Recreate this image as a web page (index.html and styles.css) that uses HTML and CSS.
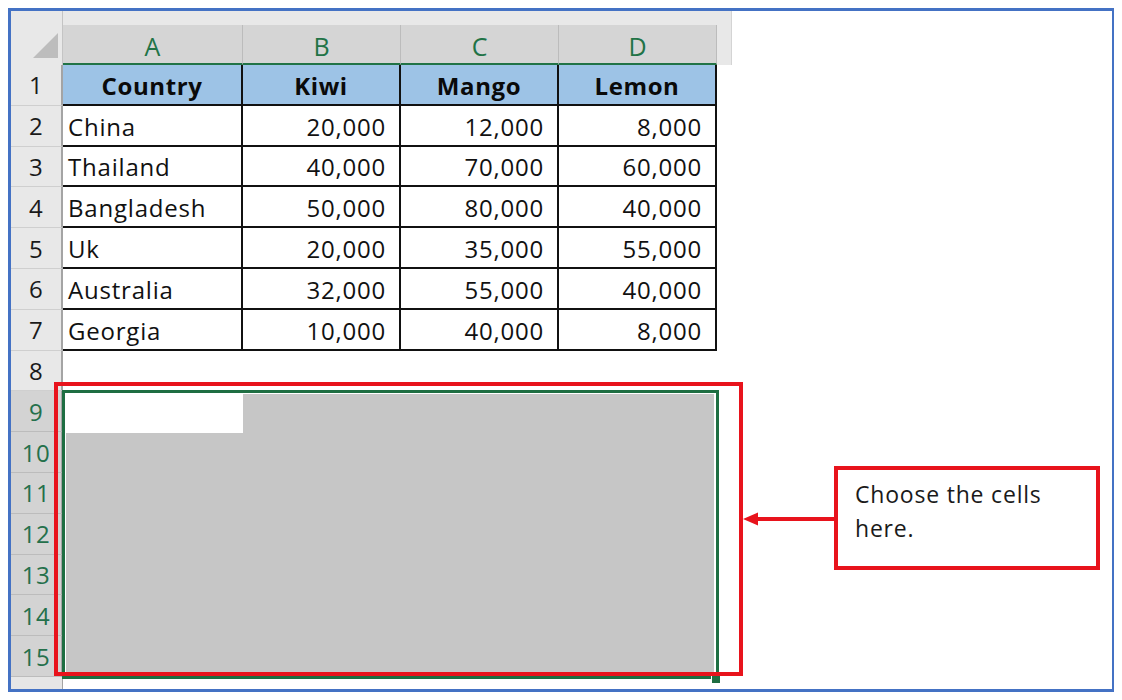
FILE: index.html
```html
<!DOCTYPE html>
<html>
<head>
<meta charset="utf-8">
<link rel="stylesheet" href="styles.css">
</head>
<body>
<div class="frame">
  <div class="sheet">
    <div class="colheads">
      <div class="corner">
        <svg class="tri" width="25" height="25" viewBox="0 0 25 25"><polygon points="25,0 25,25 0,25" fill="#bdbdbd"/></svg>
      </div>
      <div class="ch">A</div>
      <div class="ch">B</div>
      <div class="ch">C</div>
      <div class="ch">D</div>
    </div>

    <div class="row">
      <div class="rh">1</div>
      <div class="c hd">Country</div>
      <div class="c hd">Kiwi</div>
      <div class="c hd">Mango</div>
      <div class="c hd">Lemon</div>
    </div>
    <div class="row">
      <div class="rh">2</div>
      <div class="c">China</div>
      <div class="c num">20,000</div>
      <div class="c num">12,000</div>
      <div class="c num">8,000</div>
    </div>
    <div class="row">
      <div class="rh">3</div>
      <div class="c">Thailand</div>
      <div class="c num">40,000</div>
      <div class="c num">70,000</div>
      <div class="c num">60,000</div>
    </div>
    <div class="row">
      <div class="rh">4</div>
      <div class="c">Bangladesh</div>
      <div class="c num">50,000</div>
      <div class="c num">80,000</div>
      <div class="c num">40,000</div>
    </div>
    <div class="row">
      <div class="rh">5</div>
      <div class="c">Uk</div>
      <div class="c num">20,000</div>
      <div class="c num">35,000</div>
      <div class="c num">55,000</div>
    </div>
    <div class="row">
      <div class="rh">6</div>
      <div class="c">Australia</div>
      <div class="c num">32,000</div>
      <div class="c num">55,000</div>
      <div class="c num">40,000</div>
    </div>
    <div class="row">
      <div class="rh">7</div>
      <div class="c">Georgia</div>
      <div class="c num">10,000</div>
      <div class="c num">40,000</div>
      <div class="c num">8,000</div>
    </div>
    <div class="row">
      <div class="rh">8</div>
    </div>

    <div class="selblock">
      <div class="rhs">
        <div class="rh sel">9</div>
        <div class="rh sel">10</div>
        <div class="rh sel">11</div>
        <div class="rh sel">12</div>
        <div class="rh sel">13</div>
        <div class="rh sel">14</div>
        <div class="rh sel">15</div>
      </div>
      <div class="selection">
        <div class="selfill"><div class="active"></div></div>
        <span class="handle"></span>
      </div>
    </div>

    <div class="row16">
      <div class="rh16"></div>
    </div>
  </div>

  <div class="redbox"></div>
  <svg class="arrow" width="92" height="16" viewBox="0 0 92 16">
    <line x1="12" y1="8" x2="92" y2="8" stroke="#e8131c" stroke-width="4"/>
    <polygon points="0,8 15,1.5 15,14.5" fill="#e8131c"/>
  </svg>
  <div class="callout">Choose the cells<br>here.</div>
</div>
</body>
</html>
```

FILE: styles.css
```css
body {
  margin: 8px;
  background: #ffffff;
  font-family: "Open Sans", "Noto Sans", sans-serif;
  color: #111111;
}

.frame {
  position: relative;
  width: 1107px;
  height: 684px;
  box-sizing: border-box;
  border: 3px solid #4472c4;
  background: #ffffff;
}

.sheet {
  width: 721px;
  display: flex;
  flex-direction: column;
}

.colheads {
  display: grid;
  grid-template-columns: 52px 180px 158px 158px 158px;
  height: 54px;
  background: #e8e8e8;
  border-right: 1px solid #d4d4d4;
  box-sizing: border-box;
}

.corner {
  position: relative;
  border-right: 1px solid #c4c4c4;
}

.tri {
  position: absolute;
  left: 22px;
  top: 22px;
}

.ch {
  margin-top: 14px;
  border-bottom: 2px solid #217346;
  border-right: 1px solid #bcbcbc;
  background: #d5d5d5;
  color: #217346;
  font-size: 25px;
  display: flex;
  align-items: center;
  justify-content: center;
  padding-top: 3px;
  box-sizing: content-box;
  height: 35px;
}

.row {
  display: grid;
  grid-template-columns: 52px 180px 158px 158px 158px;
  height: 40.8px;
}

.rh {
  box-sizing: border-box;
  background: #e8e8e8;
  border-bottom: 1px solid #cfcfcf;
  border-right: 2px solid #a4a4a4;
  display: flex;
  align-items: center;
  justify-content: center;
  font-size: 24px;
  color: #1a1a1a;
  letter-spacing: 0.5px;
}

.c {
  box-sizing: border-box;
  border-right: 2px solid #111111;
  border-bottom: 2px solid #111111;
  display: flex;
  align-items: center;
  padding: 2px 13px 0 5px;
  font-size: 24px;
  letter-spacing: 0.8px;
  white-space: nowrap;
  background: #ffffff;
  color: #111111;
}

.c.num {
  justify-content: flex-end;
}

.c.hd {
  background: #9dc3e6;
  font-weight: 700;
  justify-content: center;
  padding: 2px 0 0 0;
  letter-spacing: 0.6px;
  color: #0a0a0a;
}

.selblock {
  display: grid;
  grid-template-columns: 52px 657px;
  height: 285.6px;
}

.rhs {
  display: grid;
  grid-template-rows: repeat(7, 40.8px);
}

.rh.sel {
  background: #d3d3d3;
  color: #24704b;
  border-bottom: 1px solid #bcbcbc;
}

.selection {
  position: relative;
  box-sizing: border-box;
  width: 657px;
  height: 289px;
  margin: -1px 0 0 -1px;
  border: 3px solid #1e6e42;
  padding: 1px 2px 2px 1px;
  background: #ffffff;
}

.selfill {
  height: 100%;
  background: #c6c6c6;
}

.active {
  width: 177px;
  height: 39px;
  background: #ffffff;
}

.handle {
  position: absolute;
  right: -4px;
  bottom: -7px;
  width: 8px;
  height: 8px;
  background: #1e6e42;
  border-left: 1px solid #ffffff;
  border-top: 1px solid #ffffff;
}

.row16 {
  display: flex;
  height: 12px;
}

.rh16 {
  width: 52px;
  box-sizing: border-box;
  background: #e6e6e6;
  border-right: 1px solid #a4a4a4;
}

.redbox {
  position: absolute;
  left: 43px;
  top: 371px;
  width: 689px;
  height: 294px;
  box-sizing: border-box;
  border: 4px solid #e8131c;
}

.arrow {
  position: absolute;
  left: 732px;
  top: 500px;
}

.callout {
  position: absolute;
  left: 823px;
  top: 455px;
  width: 266px;
  height: 104px;
  box-sizing: border-box;
  border: 4px solid #e8131c;
  background: #ffffff;
  padding: 7px 8px 0 17px;
  font-size: 23px;
  letter-spacing: 0.8px;
  line-height: 34px;
  color: #1a1a1a;
}
```
